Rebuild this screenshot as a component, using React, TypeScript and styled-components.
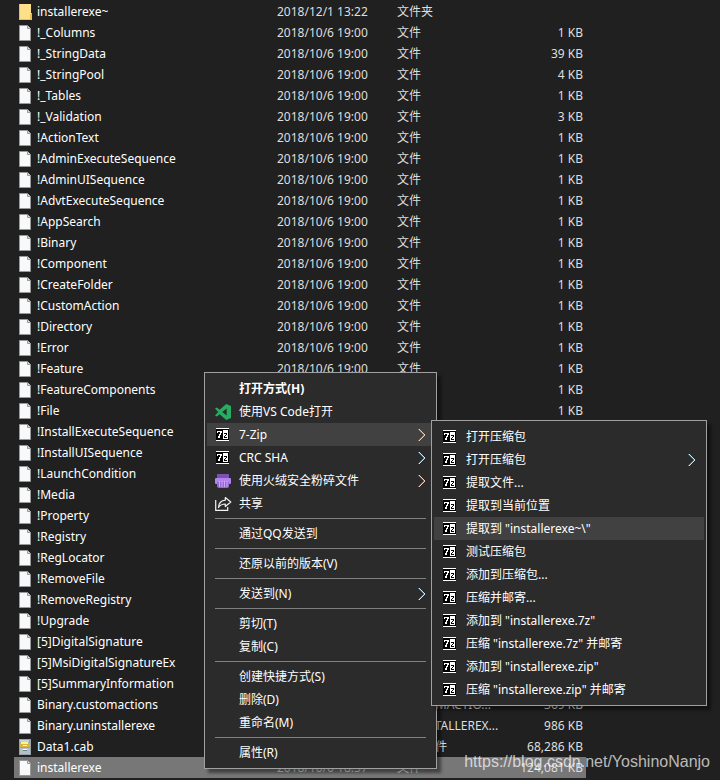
import React from "react";
import styled, { createGlobalStyle } from "styled-components";

const GlobalStyle = createGlobalStyle`
  * { box-sizing: border-box; }
  html, body { margin: 0; background: #202020; }
  body {
    font-family: "Noto Sans", "Noto Sans CJK SC", sans-serif;
    font-size: 12px;
    line-height: 21px;
    color: #ffffff;
  }
`;

const Window = styled.main`
  position: relative;
  min-height: 100vh;
  overflow: hidden;
  padding: 1px 0 1px 14px;
  background: #202020;
`;

const FileTable = styled.table`
  table-layout: fixed;
  width: 572px;
  border-collapse: collapse;
  white-space: nowrap;
`;

const FileRow = styled.tr<{ $selected?: boolean }>`
  height: 21px;
  background: ${(p) => (p.$selected ? "#777777" : "transparent")};
`;

const Cell = styled.td<{ $align?: "right" }>`
  padding: 0 3px 0 0;
  height: 21px;
  overflow: hidden;
  text-overflow: ellipsis;
  color: #dedede;
  text-align: ${(p) => p.$align ?? "left"};
`;

const NameCell = styled.div`
  display: flex;
  align-items: center;
  padding-left: 5px;
  color: #ffffff;
`;

const FileIconSlot = styled.span`
  display: flex;
  flex: none;
  width: 18px;
`;

const Menu = styled.div<{ $x: number; $y: number; $width: number }>`
  position: absolute;
  left: ${(p) => p.$x}px;
  top: ${(p) => p.$y}px;
  width: ${(p) => p.$width}px;
  padding: 4px 2px;
  border: 1px solid #a0a0a0;
  background: #2b2b2b;
  box-shadow: 4px 4px 3px rgba(0, 0, 0, 0.45);
`;

const MenuItem = styled.button<{ $active?: boolean; $bold?: boolean }>`
  display: flex;
  align-items: center;
  width: 100%;
  height: 23px;
  padding: 0 8px;
  border: 0;
  background: ${(p) => (p.$active ? "#414141" : "transparent")};
  color: #ffffff;
  font: inherit;
  font-weight: ${(p) => (p.$bold ? 700 : 400)};
  text-align: left;
  white-space: nowrap;
`;

const IconSlot = styled.span`
  display: flex;
  flex: none;
  width: 24px;
`;

const Label = styled.span`
  flex: 1;
`;

const Separator = styled.hr`
  height: 1px;
  margin: 3px 8px;
  border: 0;
  background: #808080;
`;

const Watermark = styled.div`
  position: absolute;
  right: 10px;
  top: 752px;
  font: 16px/20px "Liberation Sans", sans-serif;
  color: rgba(255, 255, 255, 0.7);
`;

const FileIcon = () => (
  <svg width="12" height="16" viewBox="0 0 12 16" aria-hidden="true">
    <path d="M.5.5h8l3 3v12H.5z" fill="#f8f9fa" stroke="#999" />
    <path d="M8.5.5v3h3" fill="#dcdcdc" stroke="#999" />
  </svg>
);

const FolderIcon = () => (
  <svg width="13" height="16" viewBox="0 0 13 16" aria-hidden="true">
    <path d="M0 0h12v9h1v7H0z" fill="#ffe08a" />
    <path d="M0 0h1v16H0zM0 15h12v1H0zM12 9h1v7h-2V10h1z" fill="#e8bf4c" />
  </svg>
);

const CabIcon = () => (
  <svg width="12" height="16" viewBox="0 0 12 16" aria-hidden="true">
    <path d="M0 0h12v16H0z" fill="#94a3ac" />
    <path d="M1 1h9v2H1z" fill="#c9d3d8" />
    <path d="M1 4h10v4H1z" fill="#d9b73c" />
    <path d="M2 3h7v2H2z" fill="#fff09a" />
    <path d="M4 6h4v1H4z" fill="#f7f7f7" />
    <path d="M1 9h10v6H1z" fill="#b4c0c7" />
    <path d="M4 10h4v1H4z" fill="#fff" />
    <path d="M4 11h4v1H4z" fill="#6d7b84" />
  </svg>
);

const SevenZipIcon = () => (
  <svg width="15" height="13" viewBox="-1 0 15 13" shapeRendering="crispEdges" aria-hidden="true">
    <path d="M0 0h13v13H0z" fill="#000" />
    <path d="M0 0h13v1H0zM0 12h13v1H0zM7 2h5v9H7z" fill="#fff" />
    <path d="M1 3h5v2H5v2H4v3H2V8h1V6h1V4H2v1H1z" fill="#fff" />
    <path d="M8 5h3v2h-1v1H9v1h2v1H8V8h1V7h1V6H8z" fill="#000" />
  </svg>
);

const CodeIcon = () => (
  <svg width="16" height="16" viewBox="0 0 16 16" aria-hidden="true">
    <path d="M11.2 0 16 2v12l-4.800 2-6.500-5.800L1.900 12.400 0 11.400 3.200 8 0 4.600l1.900-1 2.800 2.200zM11.700 4.500 7.200 8l4.500 3.500z" fill="#26ae60" fillRule="evenodd" />
  </svg>
);

const ShredIcon = () => (
  <svg width="16" height="16" viewBox="0 0 16 16" aria-hidden="true">
    <path d="M2 1h12v4H2z" fill="#7d50b8" />
    <path d="M1 5h14q1 0 1 1v4q0 1-1 1H1q-1 0-1-1V6q0-1 1-1z" fill="#b184ec" />
    <path d="M2 9h12v4q0 2-2 2H4q-2 0-2-2z" fill="#9866da" />
    <path d="M4.500 8v6M7 8v6M9.500 8v6M12 8v6" stroke="#c9a7f5" />
  </svg>
);

const ShareIcon = () => (
  <svg width="17" height="16" viewBox="0 0 17 16" fill="none" stroke="#f2f2f2" strokeWidth="1.200" aria-hidden="true">
    <path d="M.7 4v10.400h12V11" />
    <path d="M10.300 1.500 15.800 6l-5.500 4.500V8C7 8 5 9.200 3.500 11.500 3.800 7.500 6 4.500 10.300 4.200z" strokeLinejoin="round" />
  </svg>
);

const Chevron = ({ warm }: { warm?: boolean }) => (
  <svg width="8" height="14" viewBox="0 0 8 14" fill="none" aria-hidden="true">
    <path d="M.5 1 6.500 7l-6 6" stroke={warm ? "#e8a07c" : "#7cc4e8"} strokeWidth="1" />
    <path d="M1 1l6 6-6 6" stroke={warm ? "#f3cdb8" : "#cdeaf3"} strokeWidth="1" />
  </svg>
);

const icons = { file: FileIcon, folder: FolderIcon, cab: CabIcon, zip: SevenZipIcon, code: CodeIcon, shred: ShredIcon, share: ShareIcon };

type Entry = { name: string; size?: string; type?: string; date?: string; icon?: keyof typeof icons; selected?: boolean };

const plain = (name: string, size = "1 KB"): Entry => ({ name, size });

const entries: Entry[] = [
  { name: "installerexe~", date: "2018/12/1 13:22", type: "文件夹", icon: "folder" },
  plain("!_Columns"),
  plain("!_StringData", "39 KB"),
  plain("!_StringPool", "4 KB"),
  plain("!_Tables"),
  plain("!_Validation", "3 KB"),
  plain("!ActionText"),
  plain("!AdminExecuteSequence"),
  plain("!AdminUISequence"),
  plain("!AdvtExecuteSequence"),
  plain("!AppSearch"),
  plain("!Binary"),
  plain("!Component"),
  plain("!CreateFolder"),
  plain("!CustomAction"),
  plain("!Directory"),
  plain("!Error"),
  plain("!Feature"),
  plain("!FeatureComponents"),
  plain("!File"),
  plain("!InstallExecuteSequence"),
  plain("!InstallUISequence"),
  plain("!LaunchCondition"),
  plain("!Media"),
  plain("!Property"),
  plain("!Registry"),
  plain("!RegLocator"),
  plain("!RemoveFile"),
  plain("!RemoveRegistry"),
  plain("!Upgrade"),
  plain("[5]DigitalSignature"),
  plain("[5]MsiDigitalSignatureEx"),
  plain("[5]SummaryInformation"),
  { name: "Binary.customactions", type: "CUSTOMACTIO...", size: "369 KB" },
  { name: "Binary.uninstallerexe", type: "UNINSTALLEREX...", size: "986 KB" },
  { name: "Data1.cab", type: "CAB 文件", size: "68,286 KB", icon: "cab" },
  { name: "installerexe", date: "2018/10/6 18:57", size: "124,081 KB", selected: true },
];

type Action = {
  label: string;
  icon?: keyof typeof icons;
  more?: boolean;
  warm?: boolean;
  active?: boolean;
  bold?: boolean;
};

const groups: Action[][] = [
  [
    { label: "打开方式(H)", bold: true },
    { label: "使用VS Code打开", icon: "code" },
    { label: "7-Zip", icon: "zip", more: true, warm: true, active: true },
    { label: "CRC SHA", icon: "zip", more: true },
    { label: "使用火绒安全粉碎文件", icon: "shred", more: true, warm: true },
    { label: "共享", icon: "share" },
  ],
  [{ label: "通过QQ发送到" }],
  [{ label: "还原以前的版本(V)" }],
  [{ label: "发送到(N)", more: true }],
  [{ label: "剪切(T)" }, { label: "复制(C)" }],
  [{ label: "创建快捷方式(S)" }, { label: "删除(D)" }, { label: "重命名(M)" }],
  [{ label: "属性(R)" }],
];

const archiveActions: Action[] = [
  { label: "打开压缩包", icon: "zip" },
  { label: "打开压缩包", icon: "zip", more: true },
  { label: "提取文件...", icon: "zip" },
  { label: "提取到当前位置", icon: "zip" },
  { label: '提取到 "installerexe~\\"', icon: "zip", active: true },
  { label: "测试压缩包", icon: "zip" },
  { label: "添加到压缩包...", icon: "zip" },
  { label: "压缩并邮寄...", icon: "zip" },
  { label: '添加到 "installerexe.7z"', icon: "zip" },
  { label: '压缩 "installerexe.7z" 并邮寄', icon: "zip" },
  { label: '添加到 "installerexe.zip"', icon: "zip" },
  { label: '压缩 "installerexe.zip" 并邮寄', icon: "zip" },
];

const ActionItem = ({ label, icon, more, warm, active, bold }: Action) => {
  const Icon = icon ? icons[icon] : null;
  return (
    <MenuItem type="button" role="menuitem" aria-haspopup={more ? "menu" : undefined} $active={active} $bold={bold}>
      <IconSlot>{Icon && <Icon />}</IconSlot>
      <Label>{label}</Label>
      {more && <Chevron warm={warm} />}
    </MenuItem>
  );
};

export default function App() {
  return (
    <Window>
      <GlobalStyle />
      <FileTable>
        <colgroup>
          <col width="263" />
          <col width="120" />
          <col width="112" />
          <col />
        </colgroup>
        <tbody>
          {entries.map((e) => {
            const Icon = icons[e.icon ?? "file"];
            return (
              <FileRow key={e.name} $selected={e.selected}>
                <Cell>
                  <NameCell>
                    <FileIconSlot>
                      <Icon />
                    </FileIconSlot>
                    {e.name}
                  </NameCell>
                </Cell>
                <Cell>{e.date ?? "2018/10/6 19:00"}</Cell>
                <Cell>{e.type ?? "文件"}</Cell>
                <Cell $align="right">{e.size}</Cell>
              </FileRow>
            );
          })}
        </tbody>
      </FileTable>
      <Menu role="menu" $x={204} $y={372} $width={233}>
        {groups.map((group, i) => (
          <React.Fragment key={group[0].label}>
            {i > 0 && <Separator />}
            {group.map((a) => (
              <ActionItem key={a.label} {...a} />
            ))}
          </React.Fragment>
        ))}
      </Menu>
      <Menu role="menu" $x={431} $y={420} $width={276}>
        {archiveActions.map((a, i) => (
          <ActionItem key={i} {...a} />
        ))}
      </Menu>
      <Watermark>https://blog.csdn.net/YoshinoNanjo</Watermark>
    </Window>
  );
}
